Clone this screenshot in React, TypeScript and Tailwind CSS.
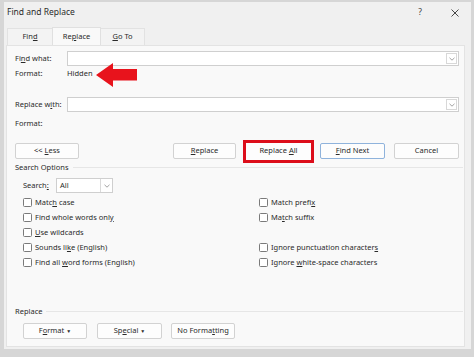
import React from "react";

const U = ({ children }: { children: React.ReactNode }) => <span className="underline underline-offset-[1px]">{children}</span>;

const Chevron = () => (
  <svg width="6" height="4" viewBox="0 0 6 4"><path d="M0.5 0.8 L3 3.2 L5.5 0.8" fill="none" stroke="#8a8a8a" strokeWidth="0.8" /></svg>
);

const Combo = ({ w }: { w: string }) => (
  <div className={`${w} h-[15px] bg-white border border-[#cfcfcf] flex justify-end items-center pr-[1px]`}>
    <div className="w-[11px] h-[11px] border border-[#d8d8d8] flex items-center justify-center bg-white">
      <Chevron />
    </div>
  </div>
);

const Btn = ({ children, w, blue }: { children: React.ReactNode; w: string; blue?: boolean }) => (
  <div className={`${w} h-[16px] bg-[#fdfdfd] border ${blue ? "border-[#8fb3dc]" : "border-[#d2d2d2]"} rounded-[2px] flex items-center justify-center whitespace-pre`}>
    {children}
  </div>
);

const Cb = ({ children }: { children: React.ReactNode }) => (
  <div className="h-[15px] flex items-center">
    <div className="w-[9px] h-[9px] border border-[#7a7a7a] rounded-[1.5px] bg-white mr-[3px]" />
    <span>{children}</span>
  </div>
);

export default function App() {
  return (
    <div className="w-[474px] h-[357px] bg-[#d6d6d6] pl-[4px] pt-[2px] text-[#2a2a2a] text-[7.5px] leading-none" style={{ fontFamily: '"Noto Sans", "Open Sans", sans-serif' }}>
      <div className="w-[467px] h-[347px] bg-[#f0f0f0] flex flex-col">
        {/* title */}
        <div className="h-[20px] flex items-center pl-[3px] pr-[12px] pt-[1px]">
          <span className="text-[8.5px]">Find and Replace</span>
          <span className="ml-auto text-[8.5px] text-[#444]">?</span>
          <svg className="ml-[29px]" width="8" height="8" viewBox="0 0 8 8"><path d="M0.5 0.5 L7.5 7.5 M7.5 0.5 L0.5 7.5" stroke="#333" strokeWidth="0.9" /></svg>
        </div>
        {/* tabs */}
        <div className="h-[23px] flex items-end pl-[3px]">
          <div className="w-[45px] h-[17px] bg-[#f3f3f3] border-l border-t border-[#e2e2e2] flex items-center justify-center"><span>Fin<U>d</U></span></div>
          <div className="w-[49px] h-[18px] bg-[#f9f9f9] border-l border-t border-r border-[#e0e0e0] flex items-center justify-center"><span>Re<U>p</U>lace</span></div>
          <div className="w-[44px] h-[17px] bg-[#f3f3f3] border-t border-r border-[#e2e2e2] flex items-center justify-center"><span><U>G</U>o To</span></div>
        </div>
        {/* panel */}
        <div className="ml-[2px] w-[459px] h-[302px] bg-[#f9f9f9] border border-[#e3e3e3] flex flex-col relative">
          <div className="h-[5px]" />
          <div className="h-[15px] flex items-center pl-[8px]">
            <span className="w-[52px]">Fi<U>n</U>d what:</span>
            <Combo w="w-[392px]" />
          </div>
          <div className="h-[16px] flex items-center pl-[8px] relative">
            <span className="w-[52px]">Format:</span>
            <span>Hidden</span>
            <svg className="absolute left-[89px] top-[-3px]" width="42" height="24" viewBox="0 0 42 24">
              <polygon points="0,12 17,0 17,6 41,6 41,17.5 17,17.5 17,24" fill="#e8131c" />
            </svg>
          </div>
          <div className="h-[15px]" />
          <div className="h-[15px] flex items-center pl-[8px]">
            <span className="w-[52px]">Replace w<U>i</U>th:</span>
            <Combo w="w-[392px]" />
          </div>
          <div className="h-[24px] flex items-center pl-[8px]">
            <span>Format:</span>
          </div>
          <div className="h-[7px]" />
          <div className="h-[16px] flex items-center pl-[8px]">
            <Btn w="w-[64px]">{"<< "}<U>L</U>ess</Btn>
            <div className="ml-[94px]"><Btn w="w-[63px]"><U>R</U>eplace</Btn></div>
            <div className="ml-[7px] w-[71px] h-[23px] border-[3px] border-[#dc0d1a] flex items-center justify-center bg-[#fdfdfd]">
              <span>Replace <U>A</U>ll</span>
            </div>
            <div className="ml-[6px]"><Btn w="w-[65px]" blue><U>F</U>ind Next</Btn></div>
            <div className="ml-[9px]"><Btn w="w-[65px]">Cancel</Btn></div>
          </div>
          <div className="h-[18px] flex items-center pl-[8px] pr-[1px]">
            <span>Search Options</span>
            <div className="flex-1 border-t border-[#e6e6e6] ml-[4px] mb-[1px]" />
          </div>
          <div className="mt-[1px] h-[15px] flex items-center pl-[16px]">
            <span className="w-[33px]">Search<U>:</U></span>
            <div className="w-[57px] h-[15px] bg-white border border-[#cfcfcf] flex items-center pl-[3px]">
              <span>All</span>
              <div className="ml-auto w-[12px] h-full border-l border-[#dadada] flex items-center justify-center"><Chevron /></div>
            </div>
          </div>
          <div className="mt-[2px] grid grid-cols-[236px_1fr] pl-[16px]">
            <div className="flex flex-col">
              <Cb>Matc<U>h</U> case</Cb>
              <Cb>Find whole words onl<U>y</U></Cb>
              <Cb><U>U</U>se wildcards</Cb>
              <Cb>Sounds li<U>k</U>e (English)</Cb>
              <Cb>Find all <U>w</U>ord forms (English)</Cb>
            </div>
            <div className="flex flex-col">
              <Cb>Match prefi<U>x</U></Cb>
              <Cb>Ma<U>t</U>ch suffix</Cb>
              <div className="h-[15px]" />
              <Cb>Ignore punctuation character<U>s</U></Cb>
              <Cb>Ignore <U>w</U>hite-space characters</Cb>
            </div>
          </div>
          <div className="mt-[34px] h-[16px] flex items-center pl-[8px] pr-[1px]">
            <span>Replace</span>
            <div className="flex-1 border-t border-[#e6e6e6] ml-[4px] mb-[1px]" />
          </div>
          <div className="mt-[3px] h-[16px] flex items-center pl-[16px]">
            <Btn w="w-[64px]">F<U>o</U>rmat <span className="text-[5px]">▼</span></Btn>
            <div className="ml-[10px]"><Btn w="w-[65px]">Sp<U>e</U>cial <span className="text-[5px]">▼</span></Btn></div>
            <div className="ml-[9px]"><Btn w="w-[64px]">No Forma<U>t</U>ting</Btn></div>
          </div>
        </div>
      </div>
    </div>
  );
}
